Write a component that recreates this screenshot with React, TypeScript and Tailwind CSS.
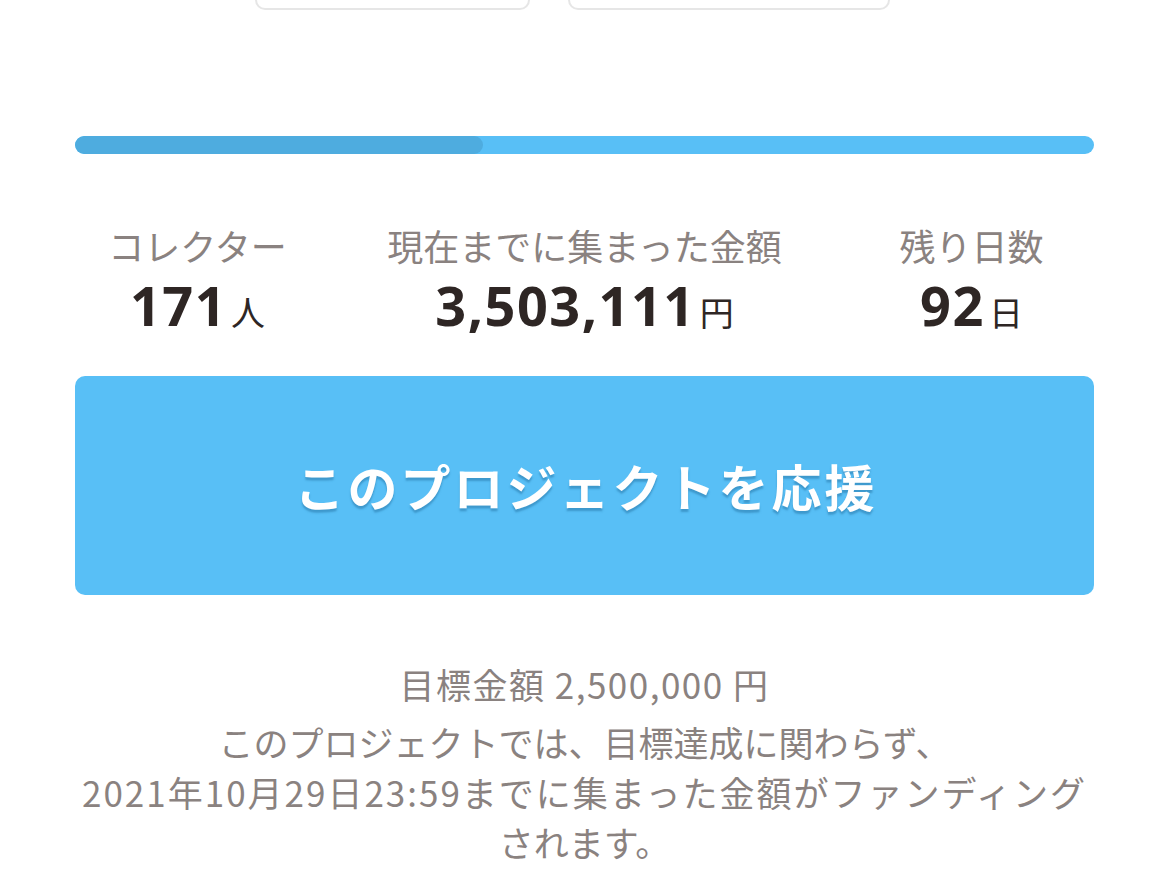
export default function App() {
  const jp = { fontFamily: '"Noto Sans CJK JP", "Noto Sans", sans-serif' };
  const num = { fontFamily: '"Noto Sans", "Noto Sans CJK JP", sans-serif' };
  return (
    <div className="min-h-screen bg-white px-[75px]" style={jp}>
      <div className="flex h-[10px] pl-[180px] gap-[38px]">
        <div className="w-[275px] h-full border-2 border-t-0 border-[#e6e6e6] rounded-b-[18px]" />
        <div className="w-[322px] h-full border-2 border-t-0 border-[#e6e6e6] rounded-b-[18px]" />
      </div>

      <div className="mt-[126px] h-[18px] w-full rounded-full bg-[#58bff6] overflow-hidden">
        <div className="h-full w-[40%] rounded-full bg-[#4eacdf]" />
      </div>

      <div className="mt-[66px] grid grid-cols-[245px_1fr_245px] text-center">
        {[
          { label: "コレクター", value: "171", unit: "人" },
          { label: "現在までに集まった金額", value: "3,503,111", unit: "円" },
          { label: "残り日数", value: "92", unit: "日" },
        ].map((s) => (
          <div key={s.label} className="flex flex-col items-center">
            <div className="text-[36px] leading-[50px] text-[#8a8280]">{s.label}</div>
            <div className="flex items-baseline leading-[70px] text-[#2e2624]">
              <span className="text-[54px] font-bold tracking-[1.5px]" style={num}>{s.value}</span>
              <span className="ml-[4px] text-[34px]">{s.unit}</span>
            </div>
          </div>
        ))}
      </div>

      <button className="mt-[29px] flex h-[219px] w-full items-center justify-center rounded-[10px] bg-[#58bff6] pl-[3px] text-[50px] font-bold tracking-[3px] text-white [text-shadow:0_3px_2px_rgba(40,120,170,0.55)]">
        このプロジェクトを応援
      </button>

      <div className="mt-[64px] text-center text-[35px] leading-[50px] text-[#8a8280]">
        <div className="mb-[8px] tracking-[1.5px]">目標金額 2,500,000 円</div>
        <div>このプロジェクトでは、目標達成に関わらず、</div>
        <div className="tracking-[2px]">2021年10月29日23:59までに集まった金額がファンディング</div>
        <div>されます。</div>
      </div>
    </div>
  );
}
